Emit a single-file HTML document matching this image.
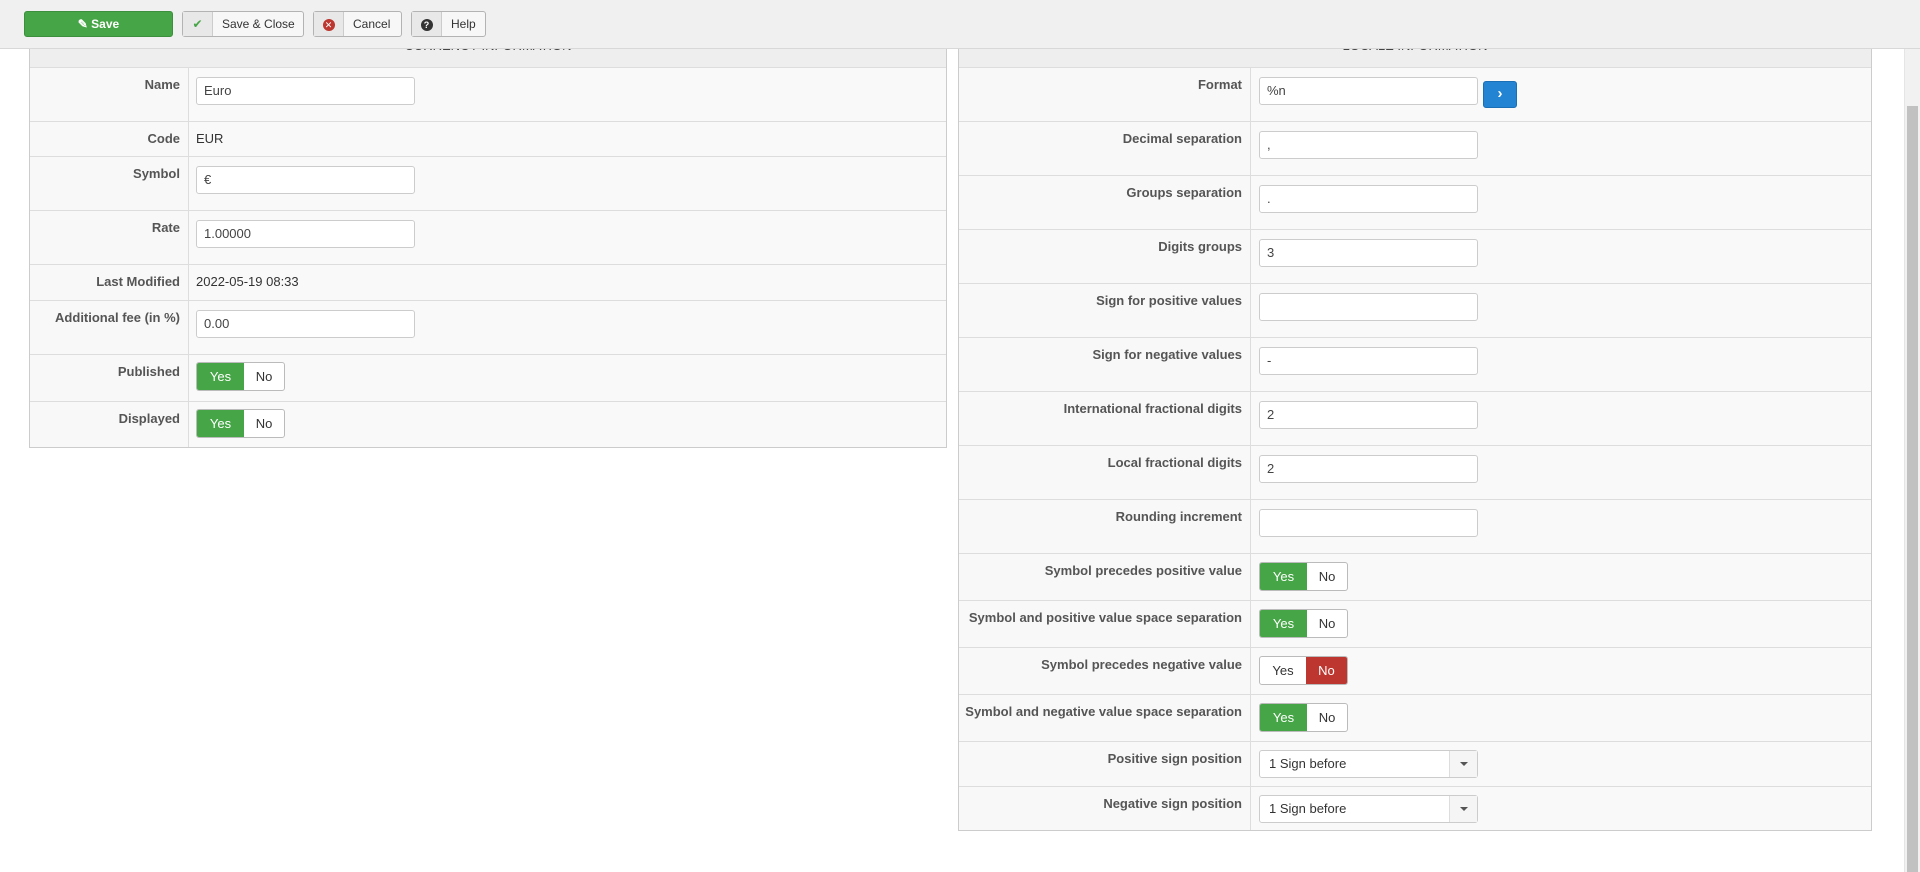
<!DOCTYPE html>
<html><head><meta charset="utf-8"><style>
*{box-sizing:border-box;margin:0;padding:0}
body{width:1920px;height:872px;overflow:hidden;background:#fff;font-family:"Liberation Sans",sans-serif;font-size:13px;color:#333;position:relative}
.tb{position:absolute;left:0;top:0;width:1920px;height:49px;background:#f0f0f0;border-bottom:1px solid #d8d8d8;z-index:5}
.btn{position:absolute;top:11px;height:26px;border:1px solid #b3b3b3;border-radius:3px;background:#f7f7f7;font-size:12px;line-height:24px;color:#333;display:flex;white-space:nowrap}
.btn .ic{width:30px;flex:none;border-right:1px solid #ccc;background:#e8e8e8;text-align:center}
.btn .tx{padding:0 9px}
.panel{position:absolute;border:1px solid #ccc;background:#f8f8f8}
.row{position:absolute;left:0;right:0;border-top:1px solid #ddd}
.lbl{position:absolute;left:0;text-align:right;font-weight:bold;color:#555;font-size:13px;top:9px}
.col{position:absolute;top:0;bottom:0;border-left:1px solid #ddd;background:#f9f9f9}
.inp{position:absolute;height:28px;border:1px solid #ccc;border-radius:3px;background:#fff;font-size:13px;line-height:26px;padding-left:7px;color:#444}
.tg{position:absolute;height:29px;width:89px;border:1px solid #bbb;border-radius:3px;display:flex;font-size:13px;line-height:27px;background:#fff;overflow:hidden}
.tg span{text-align:center}
.tg .a{width:47px}.tg .b{width:40px}
.g{background:#46a546;color:#fff}.r{background:#bd362f;color:#fff}
.sel{position:absolute;height:28px;width:219px;border:1px solid #ccc;border-radius:3px;background:#fff;font-size:13px;line-height:26px;padding-left:9px}
.sel .ar{position:absolute;right:0;top:0;bottom:0;width:28px;border-left:1px solid #ddd;background:#f5f5f5}
.sel .ar:after{content:"";position:absolute;left:10px;top:11px;border:4px solid transparent;border-top:4px solid #555}
.hdr{position:absolute;left:0;right:0;top:0;background:#eee;text-align:center;font-size:13px;color:#444}
</style></head><body>
<div class="tb">
 <div class="btn" style="left:24px;width:149px;background:#46a546;border-color:#3c8f3c;color:#fff;justify-content:center;font-weight:bold"><span>&#9998; Save</span></div>
 <div class="btn" style="left:182px;width:122px"><span class="ic" style="color:#46a546">&#10004;</span><span class="tx">Save &amp; Close</span></div>
 <div class="btn" style="left:313px;width:89px"><span class="ic"><span style="display:inline-block;width:12px;height:12px;border-radius:6px;background:#bd362f;color:#fff;font-size:9px;line-height:12px;margin-top:6px">✕</span></span><span class="tx">Cancel</span></div>
 <div class="btn" style="left:411px;width:75px"><span class="ic"><span style="display:inline-block;width:12px;height:12px;border-radius:6px;background:#333;color:#fff;font-size:9px;line-height:12px;margin-top:6px;font-weight:bold">?</span></span><span class="tx">Help</span></div>
</div>

<div class="panel" style="left:29px;top:40px;width:918px;height:408px">
 <div class="hdr" style="height:26px;line-height:10px">CURRENCY INFORMATION</div>
 <div class="col" style="left:158px;top:26px;right:0"></div>
 <div class="row" style="top:26px;height:54px"><div class="lbl" style="width:150px">Name</div><div class="inp" style="left:166px;top:9px;width:219px">Euro</div></div>
 <div class="row" style="top:80px;height:35px"><div class="lbl" style="width:150px">Code</div><div style="position:absolute;left:166px;top:9px">EUR</div></div>
 <div class="row" style="top:115px;height:54px"><div class="lbl" style="width:150px">Symbol</div><div class="inp" style="left:166px;top:9px;width:219px">€</div></div>
 <div class="row" style="top:169px;height:54px"><div class="lbl" style="width:150px">Rate</div><div class="inp" style="left:166px;top:9px;width:219px">1.00000</div></div>
 <div class="row" style="top:223px;height:36px"><div class="lbl" style="width:150px">Last Modified</div><div style="position:absolute;left:166px;top:9px">2022-05-19 08:33</div></div>
 <div class="row" style="top:259px;height:54px"><div class="lbl" style="width:150px">Additional fee (in %)</div><div class="inp" style="left:166px;top:9px;width:219px">0.00</div></div>
 <div class="row" style="top:313px;height:47px"><div class="lbl" style="width:150px">Published</div><div class="tg" style="left:166px;top:7px"><span class="a g">Yes</span><span class="b">No</span></div></div>
 <div class="row" style="top:360px;height:47px"><div class="lbl" style="width:150px">Displayed</div><div class="tg" style="left:166px;top:7px"><span class="a g">Yes</span><span class="b">No</span></div></div>
</div>

<div class="panel" style="left:958px;top:40px;width:914px;height:791px">
 <div class="hdr" style="height:26px;line-height:10px">LOCALE INFORMATION</div>
 <div class="col" style="left:291px;top:26px;right:0"></div>
 <div class="row" style="top:26px;height:54px"><div class="lbl" style="width:283px">Format</div><div class="inp" style="left:300px;top:9px;width:219px">%n</div><div style="position:absolute;left:524px;top:13px;width:34px;height:27px;background:#2384d3;border:1px solid #1a6fb5;border-radius:3px;color:#fff;text-align:center;font-weight:bold;line-height:24px;font-size:15px">›</div></div>
 <div class="row" style="top:80px;height:54px"><div class="lbl" style="width:283px">Decimal separation</div><div class="inp" style="left:300px;top:9px;width:219px">,</div></div>
 <div class="row" style="top:134px;height:54px"><div class="lbl" style="width:283px">Groups separation</div><div class="inp" style="left:300px;top:9px;width:219px">.</div></div>
 <div class="row" style="top:188px;height:54px"><div class="lbl" style="width:283px">Digits groups</div><div class="inp" style="left:300px;top:9px;width:219px">3</div></div>
 <div class="row" style="top:242px;height:54px"><div class="lbl" style="width:283px">Sign for positive values</div><div class="inp" style="left:300px;top:9px;width:219px"></div></div>
 <div class="row" style="top:296px;height:54px"><div class="lbl" style="width:283px">Sign for negative values</div><div class="inp" style="left:300px;top:9px;width:219px">-</div></div>
 <div class="row" style="top:350px;height:54px"><div class="lbl" style="width:283px">International fractional digits</div><div class="inp" style="left:300px;top:9px;width:219px">2</div></div>
 <div class="row" style="top:404px;height:54px"><div class="lbl" style="width:283px">Local fractional digits</div><div class="inp" style="left:300px;top:9px;width:219px">2</div></div>
 <div class="row" style="top:458px;height:54px"><div class="lbl" style="width:283px">Rounding increment</div><div class="inp" style="left:300px;top:9px;width:219px"></div></div>
 <div class="row" style="top:512px;height:47px"><div class="lbl" style="width:283px">Symbol precedes positive value</div><div class="tg" style="left:300px;top:8px"><span class="a g">Yes</span><span class="b">No</span></div></div>
 <div class="row" style="top:559px;height:47px"><div class="lbl" style="width:283px">Symbol and positive value space separation</div><div class="tg" style="left:300px;top:8px"><span class="a g">Yes</span><span class="b">No</span></div></div>
 <div class="row" style="top:606px;height:47px"><div class="lbl" style="width:283px">Symbol precedes negative value</div><div class="tg" style="left:300px;top:8px"><span class="a">Yes</span><span class="b r" style="width:42px">No</span></div></div>
 <div class="row" style="top:653px;height:47px"><div class="lbl" style="width:283px">Symbol and negative value space separation</div><div class="tg" style="left:300px;top:8px"><span class="a g">Yes</span><span class="b">No</span></div></div>
 <div class="row" style="top:700px;height:45px"><div class="lbl" style="width:283px">Positive sign position</div><div class="sel" style="left:300px;top:8px">1 Sign before<span class="ar"></span></div></div>
 <div class="row" style="top:745px;height:45px"><div class="lbl" style="width:283px">Negative sign position</div><div class="sel" style="left:300px;top:8px">1 Sign before<span class="ar"></span></div></div>
</div>

<div style="position:absolute;left:1904px;top:49px;width:16px;height:823px;background:#f1f1f1;border-left:1px solid #e5e5e5"></div>
<div style="position:absolute;left:1907px;top:106px;width:11px;height:766px;background:#c1c1c1"></div>
</body></html>
